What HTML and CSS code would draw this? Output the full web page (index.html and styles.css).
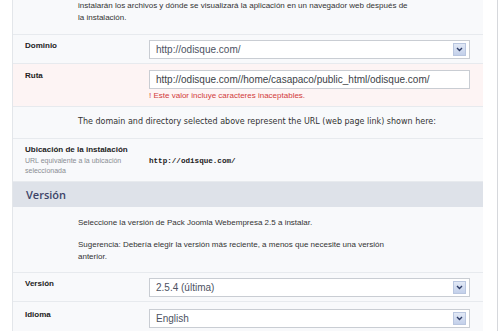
FILE: index.html
```html
<!DOCTYPE html>
<html lang="es">
<head>
    <meta charset="UTF-8">
    <title>Instalación</title>
    <link rel="stylesheet" href="styles.css">
</head>
<body>
    <div class="page">
        <div class="panel">
            <div class="row note top">
                <p>instalarán los archivos y dónde se visualizará la aplicación en un navegador web después de la instalación.</p>
            </div>

            <div class="row field">
                <label class="lbl">Dominio</label>
                <div class="ctrl">
                    <div class="select">
                        <span>http://odisque.com/</span>
                        <span class="arrow"><svg width="7" height="5" viewBox="0 0 7 5"><path d="M1 1 L3.5 3.5 L6 1" fill="none" stroke="#2d3c66" stroke-width="1.4"/></svg></span>
                    </div>
                </div>
            </div>

            <div class="row field error">
                <label class="lbl">Ruta</label>
                <div class="ctrl">
                    <div class="input">http://odisque.com//home/casapaco/public_html/odisque.com/</div>
                    <div class="err">! Este valor incluye caracteres inaceptables.</div>
                </div>
            </div>

            <div class="row note info">
                <p>The domain and directory selected above represent the URL (web page link) shown here:</p>
            </div>

            <div class="row field loc">
                <div class="lbl">
                    Ubicación de la instalación
                    <small>URL equivalente a la ubicación seleccionada</small>
                </div>
                <div class="ctrl">
                    <code>http://odisque.com/</code>
                </div>
            </div>

            <h2 class="section">Versión</h2>

            <div class="row note desc">
                <p>Seleccione la versión de Pack Joomla Webempresa 2.5 a instalar.</p>
                <p>Sugerencia: Debería elegir la versión más reciente, a menos que necesite una versión anterior.</p>
            </div>

            <div class="row field">
                <label class="lbl">Versión</label>
                <div class="ctrl">
                    <div class="select">
                        <span>2.5.4 (última)</span>
                        <span class="arrow"><svg width="7" height="5" viewBox="0 0 7 5"><path d="M1 1 L3.5 3.5 L6 1" fill="none" stroke="#2d3c66" stroke-width="1.4"/></svg></span>
                    </div>
                </div>
            </div>

            <div class="row field last">
                <label class="lbl">Idioma</label>
                <div class="ctrl">
                    <div class="select">
                        <span>English</span>
                        <span class="arrow"><svg width="7" height="5" viewBox="0 0 7 5"><path d="M1 1 L3.5 3.5 L6 1" fill="none" stroke="#2d3c66" stroke-width="1.4"/></svg></span>
                    </div>
                </div>
            </div>
        </div>
    </div>
</body>
</html>
```

FILE: styles.css
```css
body {
    margin: 0;
    padding: 0;
    background-color: #fff;
    font-family: "Liberation Sans", Arial, sans-serif;
    font-size: 8px;
    color: #333;
    overflow: hidden;
}

.page {
    width: 498px;
    height: 331px;
    border-right: 1px solid #d6d8dc;
    box-sizing: border-box;
    padding-left: 12px;
    overflow: hidden;
}

.panel {
    width: 471px;
    min-height: 331px;
    background-color: #f8f9fb;
    border-left: 1px solid #e3e6ea;
    box-sizing: border-box;
}

.row {
    border-bottom: 1px solid #e7eaee;
}

.note {
    padding: 0 13px 0 65px;
    line-height: 12px;
}

.note p {
    margin: 0;
    max-width: 332px;
}

.top {
    padding-bottom: 10px;
}

.info {
    padding-top: 9px;
    padding-bottom: 10px;
    font-family: "DejaVu Sans", sans-serif;
}

.info p {
    max-width: none;
}

.desc {
    padding-top: 10px;
    padding-bottom: 9px;
}

.desc p + p {
    margin-top: 10px;
}

.field {
    display: flex;
    padding: 5px 13px 4px 12px;
}

.error {
    padding-top: 6px;
    padding-bottom: 4px;
    background-color: #fdf4f4;
}

.loc {
    padding-top: 5px;
    padding-bottom: 5px;
}

.last {
    padding-top: 7px;
    border-bottom: none;
}

.lbl {
    width: 124px;
    flex-shrink: 0;
    font-weight: bold;
    line-height: 12px;
    color: #222;
}

.lbl small {
    display: block;
    font-weight: normal;
    font-size: 7px;
    line-height: 10px;
    color: #8a8d93;
    width: 100px;
}

.ctrl {
    flex: 1;
}

.select,
.input {
    height: 19px;
    box-sizing: border-box;
    border: 1px solid #c9cdd3;
    background-color: #fff;
    font-size: 10px;
    color: #4d5262;
    display: flex;
    align-items: center;
    justify-content: space-between;
    padding: 0 3px 0 6px;
}

.arrow {
    width: 11px;
    height: 11px;
    background: linear-gradient(#e2e9f6, #c3d0ea);
    border: 1px solid #b9c6df;
    display: flex;
    align-items: center;
    justify-content: center;
}

.input {
    color: #3c3f48;
}

.err {
    color: #d23b3b;
    line-height: 12px;
    margin-top: 1px;
}

code {
    display: block;
    padding-top: 11px;
    line-height: 12px;
    font-family: "Liberation Mono", "Courier New", monospace;
    font-size: 7.6px;
    color: #222;
    font-weight: bold;
}

.section {
    margin: 0;
    height: 25px;
    line-height: 25px;
    padding-left: 13px;
    background-color: #dee2e9;
    font-family: "Open Sans", sans-serif;
    font-size: 11px;
    font-weight: 600;
    color: #3d4468;
}
```
